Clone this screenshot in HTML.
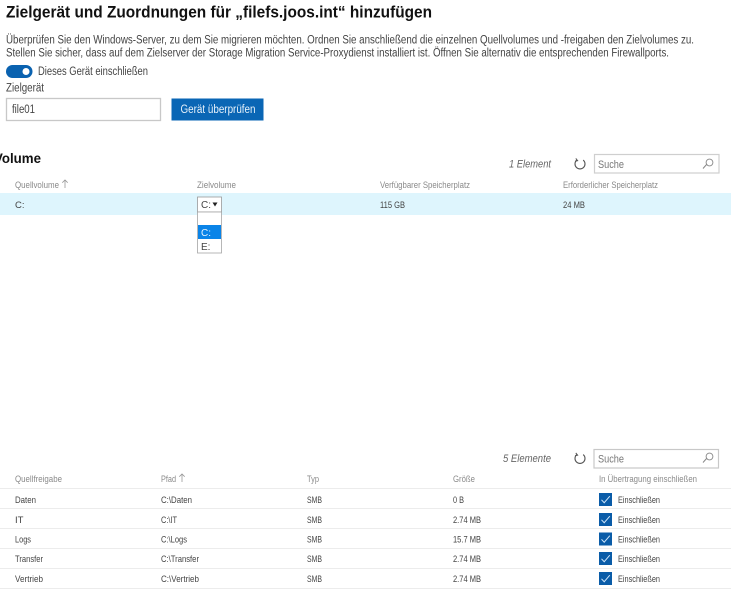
<!DOCTYPE html>
<html lang="de">
<head>
<meta charset="utf-8">
<title>Zielgerät und Zuordnungen</title>
<style>
html,body{margin:0;padding:0;background:#fff;width:731px;height:600px;overflow:hidden}
svg{display:block;position:absolute;left:0;top:0;filter:blur(.3px)}
text{font-family:"Liberation Sans",sans-serif}
.p{font-size:11.5px;fill:#444}
.h{font-size:9px;fill:#8a8a8a}
.c{font-size:9.5px;fill:#444}
.e{font-size:11px;fill:#666;font-style:italic}
.s{font-size:11px;fill:#777}
</style>
</head>
<body>
<svg width="731" height="600" viewBox="0 0 731 600" xmlns="http://www.w3.org/2000/svg">
<defs>
<g id="ref"><path d="M-3.2-3.9A5 5 0 1 0 3.2-3.9" fill="none" stroke="#555" stroke-width="1.1"/><path d="M-4.2-5.6L-2.4-3.3L-5-2.8" fill="none" stroke="#555" stroke-width="1"/></g>
<g id="mag"><circle cx="1.5" cy="-1.5" r="3.4" fill="none" stroke="#888" stroke-width=".9"/><path d="M-1-.0L-5 4.5" stroke="#888" stroke-width="1"/></g>
<g id="chk"><rect x="0" y="0" width="13" height="13" fill="#0a5ca8"/><path d="M2.5 6.8L5.2 9.7L10.8 3.2" fill="none" stroke="#cfe6fa" stroke-width="1"/></g>
</defs>

<text x="6" y="17.5" font-size="17" font-weight="bold" fill="#111" textLength="426" lengthAdjust="spacingAndGlyphs">Zielgerät und Zuordnungen für „filefs.joos.int“ hinzufügen</text>
<text x="6" y="43.5" class="p" textLength="688" lengthAdjust="spacingAndGlyphs">Überprüfen Sie den Windows-Server, zu dem Sie migrieren möchten. Ordnen Sie anschließend die einzelnen Quellvolumes und -freigaben den Zielvolumes zu.</text>
<text x="6" y="56.5" class="p" textLength="663" lengthAdjust="spacingAndGlyphs">Stellen Sie sicher, dass auf dem Zielserver der Storage Migration Service-Proxydienst installiert ist. Öffnen Sie alternativ die entsprechenden Firewallports.</text>

<rect x="6" y="65" width="26.5" height="13" rx="6.5" fill="#0a62b0"/>
<circle cx="26" cy="71.5" r="3.5" fill="#fff"/>
<text x="38" y="75" class="p" textLength="110" lengthAdjust="spacingAndGlyphs">Dieses Gerät einschließen</text>
<text x="6" y="91.5" class="p" textLength="38" lengthAdjust="spacingAndGlyphs">Zielgerät</text>

<rect x="6.5" y="98.5" width="154" height="22" fill="#fff" stroke="#c8c8c8" stroke-width="1.3"/>
<text x="12" y="113" class="p" textLength="23" lengthAdjust="spacingAndGlyphs">file01</text>
<rect x="171.5" y="98.5" width="92" height="22" fill="#0a66b5"/>
<text x="180.5" y="113" font-size="11.5" fill="#e8f2fb" textLength="75" lengthAdjust="spacingAndGlyphs">Gerät überprüfen</text>

<text x="-6" y="163" font-size="14" font-weight="bold" fill="#111" textLength="47" lengthAdjust="spacingAndGlyphs">Volume</text>
<text x="509" y="167.5" class="e" textLength="42" lengthAdjust="spacingAndGlyphs">1 Element</text>
<use href="#ref" x="580" y="164"/>
<rect x="594.5" y="154.5" width="124.5" height="18.5" fill="#fff" stroke="#cfcfcf" stroke-width="1.2"/>
<text x="598" y="168" class="s" textLength="26" lengthAdjust="spacingAndGlyphs">Suche</text>
<use href="#mag" x="708" y="164"/>

<text x="15" y="188" class="h" textLength="44" lengthAdjust="spacingAndGlyphs">Quellvolume</text>
<path d="M65 188V180M62.3 182.7L65 180L67.7 182.7" fill="none" stroke="#999" stroke-width=".8"/>
<text x="197" y="188" class="h" textLength="39" lengthAdjust="spacingAndGlyphs">Zielvolume</text>
<text x="380" y="188" class="h" textLength="90" lengthAdjust="spacingAndGlyphs">Verfügbarer Speicherplatz</text>
<text x="563" y="188" class="h" textLength="95" lengthAdjust="spacingAndGlyphs">Erforderlicher Speicherplatz</text>

<rect x="0" y="193" width="731" height="22" fill="#def5fd"/>
<text x="15" y="208" class="c">C:</text>
<text x="380" y="208" class="c" textLength="25" lengthAdjust="spacingAndGlyphs">115 GB</text>
<text x="563" y="208" class="c" textLength="22" lengthAdjust="spacingAndGlyphs">24 MB</text>

<rect x="197.5" y="197" width="24" height="15" fill="#fff" stroke="#9a9a9a" stroke-width=".8"/>
<text x="201" y="208" font-size="10" fill="#444">C:</text>
<path d="M212.5 202.5h5l-2.5 4z" fill="#222"/>
<rect x="197.5" y="212" width="24" height="41" fill="#fff" stroke="#a5a5a5" stroke-width=".8"/>
<rect x="198" y="225" width="23" height="14" fill="#0a84e8"/>
<text x="201" y="236" font-size="10" fill="#e8f4ff">C:</text>
<text x="201" y="250" font-size="10" fill="#444">E:</text>

<text x="503" y="462" class="e" textLength="48" lengthAdjust="spacingAndGlyphs">5 Elemente</text>
<use href="#ref" x="580" y="458.5"/>
<rect x="594" y="449.5" width="124.5" height="18.5" fill="#fff" stroke="#c8c8c8" stroke-width="1.2"/>
<text x="598" y="462.5" class="s" textLength="26" lengthAdjust="spacingAndGlyphs">Suche</text>
<use href="#mag" x="708" y="458"/>

<text x="15" y="482" class="h" textLength="47" lengthAdjust="spacingAndGlyphs">Quellfreigabe</text>
<text x="161" y="482" class="h" textLength="15" lengthAdjust="spacingAndGlyphs">Pfad</text>
<path d="M182 482V474M179.3 476.7L182 474L184.7 476.7" fill="none" stroke="#999" stroke-width=".8"/>
<text x="307" y="482" class="h" textLength="12" lengthAdjust="spacingAndGlyphs">Typ</text>
<text x="453" y="482" class="h" textLength="22" lengthAdjust="spacingAndGlyphs">Größe</text>
<text x="599" y="482" class="h" textLength="98" lengthAdjust="spacingAndGlyphs">In Übertragung einschließen</text>

<g stroke="#ececec" stroke-width="1">
<path d="M0 488.5H731M0 508.5H731M0 528.5H731M0 548.5H731M0 568.5H731M0 588.5H731"/>
</g>

<text x="15" y="503" class="c" textLength="21" lengthAdjust="spacingAndGlyphs">Daten</text>
<text x="161" y="503" class="c" textLength="31" lengthAdjust="spacingAndGlyphs">C:\Daten</text>
<text x="307" y="503" class="c" textLength="15" lengthAdjust="spacingAndGlyphs">SMB</text>
<text x="453" y="503" class="c" textLength="11" lengthAdjust="spacingAndGlyphs">0 B</text>
<use href="#chk" x="599" y="493"/>
<text x="618" y="503" class="c" textLength="42" lengthAdjust="spacingAndGlyphs">Einschließen</text>

<text x="15" y="523" class="c">IT</text>
<text x="161" y="523" class="c" textLength="16" lengthAdjust="spacingAndGlyphs">C:\IT</text>
<text x="307" y="523" class="c" textLength="15" lengthAdjust="spacingAndGlyphs">SMB</text>
<text x="453" y="523" class="c" textLength="28" lengthAdjust="spacingAndGlyphs">2.74 MB</text>
<use href="#chk" x="599" y="513"/>
<text x="618" y="523" class="c" textLength="42" lengthAdjust="spacingAndGlyphs">Einschließen</text>

<text x="15" y="542.5" class="c" textLength="16" lengthAdjust="spacingAndGlyphs">Logs</text>
<text x="161" y="542.5" class="c" textLength="26" lengthAdjust="spacingAndGlyphs">C:\Logs</text>
<text x="307" y="542.5" class="c" textLength="15" lengthAdjust="spacingAndGlyphs">SMB</text>
<text x="453" y="542.5" class="c" textLength="28" lengthAdjust="spacingAndGlyphs">15.7 MB</text>
<use href="#chk" x="599" y="532.5"/>
<text x="618" y="542.5" class="c" textLength="42" lengthAdjust="spacingAndGlyphs">Einschließen</text>

<text x="15" y="562" class="c" textLength="28" lengthAdjust="spacingAndGlyphs">Transfer</text>
<text x="161" y="562" class="c" textLength="38" lengthAdjust="spacingAndGlyphs">C:\Transfer</text>
<text x="307" y="562" class="c" textLength="15" lengthAdjust="spacingAndGlyphs">SMB</text>
<text x="453" y="562" class="c" textLength="28" lengthAdjust="spacingAndGlyphs">2.74 MB</text>
<use href="#chk" x="599" y="552"/>
<text x="618" y="562" class="c" textLength="42" lengthAdjust="spacingAndGlyphs">Einschließen</text>

<text x="15" y="582" class="c" textLength="28" lengthAdjust="spacingAndGlyphs">Vertrieb</text>
<text x="161" y="582" class="c" textLength="38" lengthAdjust="spacingAndGlyphs">C:\Vertrieb</text>
<text x="307" y="582" class="c" textLength="15" lengthAdjust="spacingAndGlyphs">SMB</text>
<text x="453" y="582" class="c" textLength="28" lengthAdjust="spacingAndGlyphs">2.74 MB</text>
<use href="#chk" x="599" y="572"/>
<text x="618" y="582" class="c" textLength="42" lengthAdjust="spacingAndGlyphs">Einschließen</text>
</svg>
</body>
</html>
